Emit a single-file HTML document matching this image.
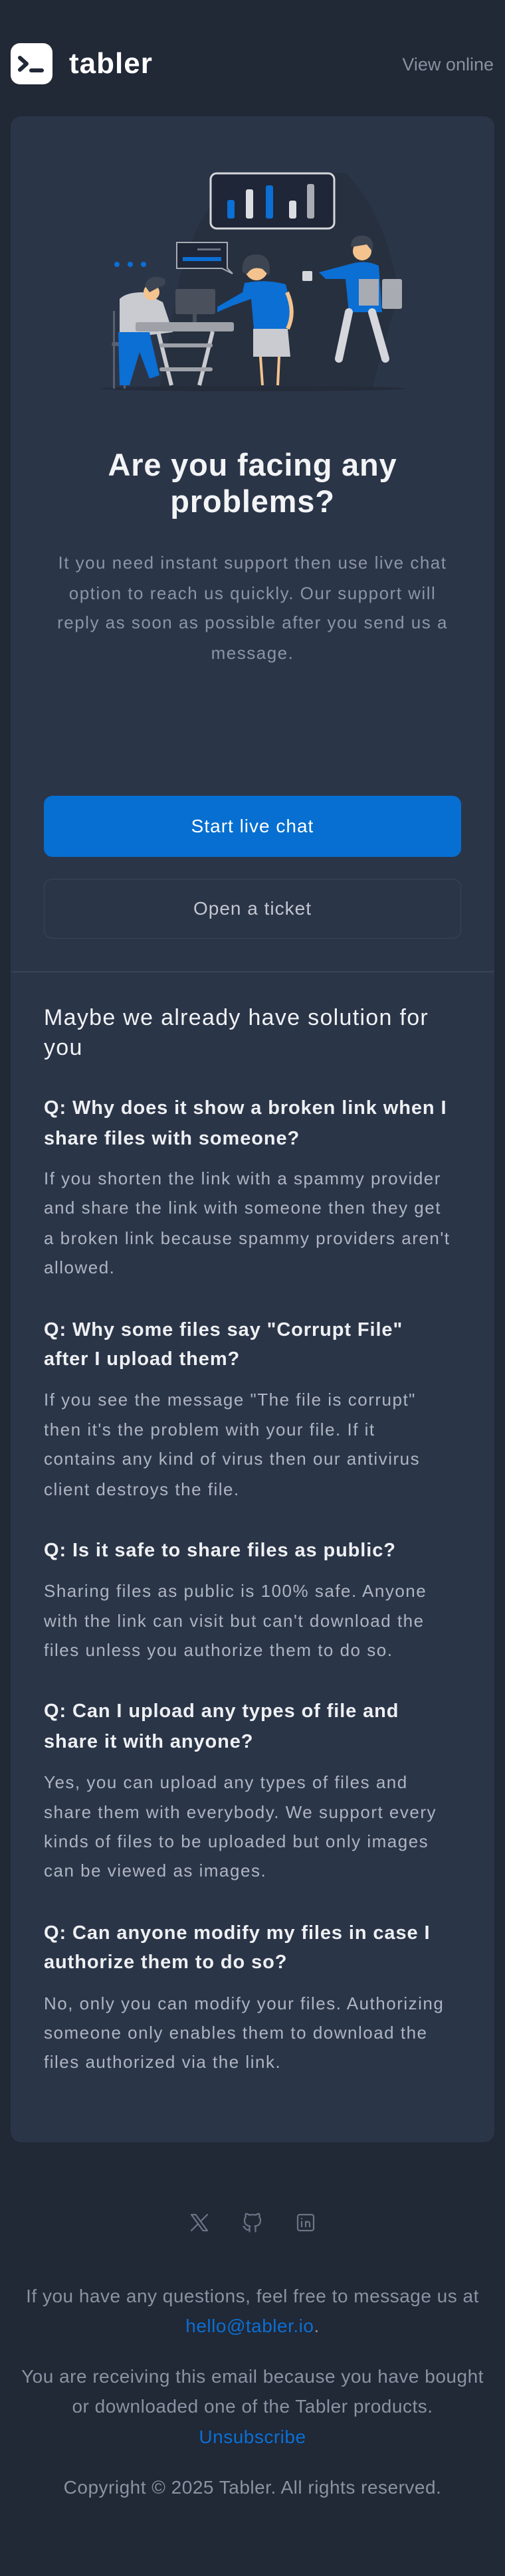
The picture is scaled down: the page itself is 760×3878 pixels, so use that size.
<!DOCTYPE html>
<html><head><meta charset="utf-8"><style>
*{margin:0;padding:0;box-sizing:border-box}
body{width:760px;height:3878px;background:#212836;font-family:"Liberation Sans",sans-serif;position:relative;overflow:hidden}
.a{position:absolute;white-space:nowrap}
.card{position:absolute;left:16px;top:175px;width:728px;height:3050px;background:#2b3548;border-radius:16px}
.h{left:0;width:760px;text-align:center;color:#f3f4f6;font-size:47px;font-weight:bold;line-height:56px;letter-spacing:.8px}
.p{left:0;width:760px;text-align:center;color:#8c95a5;font-size:26px;letter-spacing:1.5px;line-height:45px}
.q{left:66px;color:#eef0f3;font-size:29px;font-weight:bold;line-height:45px;letter-spacing:.9px}
.t{left:66px;color:#aeb5c1;font-size:26px;letter-spacing:1.5px;line-height:44px}
.f{left:0;width:760px;text-align:center;color:#8a93a3;font-size:28px;line-height:45px;letter-spacing:.5px}
.lnk{color:#0b6fd4}
</style></head><body>
<div class="a" style="left:16px;top:65px;width:63px;height:62px;background:#fff;border-radius:14px">
<svg width="63" height="62" viewBox="0 0 63 62"><path d="M14 22 L24 31 L14 40" fill="none" stroke="#212836" stroke-width="6" stroke-linecap="round" stroke-linejoin="round"/><path d="M31 41 H47" stroke="#212836" stroke-width="6" stroke-linecap="round"/></svg></div>
<div class="a" style="left:104px;top:70px;font-size:44px;font-weight:bold;color:#fff;line-height:52px;letter-spacing:1px">tabler</div>
<div class="a" style="right:17px;top:80px;font-size:27px;color:#8792a2;line-height:34px">View online</div>
<div class="card"></div>
<svg class="a" style="left:140px;top:240px" width="480" height="360" viewBox="140 240 480 360">
<path d="M270 420 Q300 300 370 260 L520 260 Q580 320 600 440 L560 585 L240 585 Z" fill="#27303f"/>
<ellipse cx="380" cy="585" rx="230" ry="4" fill="#242c3a"/>
<rect x="317" y="261" width="186" height="83" rx="9" fill="#1e2637" stroke="#d5d7dc" stroke-width="3"/>
<rect x="342" y="301" width="11" height="28" rx="3" fill="#0b6fd4"/>
<rect x="370" y="285" width="11" height="44" rx="3" fill="#dcdde2"/>
<rect x="400" y="279" width="11" height="50" rx="3" fill="#0b6fd4"/>
<rect x="435" y="302" width="11" height="27" rx="3" fill="#dcdde2"/>
<rect x="462" y="277" width="11" height="52" rx="3" fill="#a9abb2"/>
<path d="M266 365 H342 V404 L350 412 L334 404 H266 Z" fill="#1e2637" stroke="#a7acb5" stroke-width="2"/>
<rect x="297" y="374" width="35" height="3" fill="#6c7280"/>
<rect x="275" y="387" width="58" height="6" fill="#0b6fd4"/>
<circle cx="176" cy="398" r="4" fill="#0b6fd4"/><circle cx="196" cy="398" r="4" fill="#0b6fd4"/><circle cx="216" cy="398" r="4" fill="#0b6fd4"/>
<rect x="170" y="468" width="3" height="117" fill="#5a6070"/>
<rect x="168" y="515" width="50" height="6" rx="3" fill="#5a6070"/>
<rect x="186" y="521" width="3" height="64" fill="#5a6070"/>
<path d="M180 450 Q190 440 215 440 L245 455 L260 500 L180 510 Z" fill="#c9cbd0"/>
<path d="M178 500 H225 L240 565 L225 570 L210 530 L195 580 L180 580 Z" fill="#0b6fd4"/>
<circle cx="228" cy="440" r="12" fill="#f4c38e"/>
<path d="M218 430 Q225 410 248 420 Q252 430 240 432 L225 440 Z" fill="#3d4452"/>
<rect x="264" y="435" width="60" height="38" rx="3" fill="#4a505c"/>
<rect x="290" y="473" width="6" height="14" fill="#4a505c"/>
<rect x="204" y="485" width="148" height="14" rx="3" fill="#9ea1a8"/>
<path d="M238 499 L258 580 M320 499 L300 580" stroke="#c9cbd0" stroke-width="6"/>
<rect x="240" y="517" width="80" height="6" rx="3" fill="#9ea1a8"/>
<rect x="240" y="553" width="80" height="6" rx="3" fill="#9ea1a8"/>
<circle cx="386" cy="405" r="17" fill="#f4c38e"/>
<path d="M365 410 Q362 382 388 383 Q410 385 405 415 L395 405 Q380 400 372 412 Z" fill="#3d4452"/>
<path d="M368 426 Q400 420 430 428 L440 470 L430 495 H382 L378 450 L350 460 L327 470 L327 462 L365 440 Z" fill="#0b6fd4"/>
<path d="M381 495 H433 L437 537 H381 Z" fill="#c9cbd0"/>
<path d="M392 537 L395 580 M420 537 L418 580" stroke="#f4c38e" stroke-width="4"/>
<path d="M432 440 Q445 470 433 495" stroke="#f4c38e" stroke-width="6" fill="none"/>
<circle cx="545" cy="378" r="14" fill="#f4c38e"/>
<path d="M528 372 Q528 352 550 355 Q565 360 560 378 L552 368 Z" fill="#3d4452"/>
<path d="M525 398 Q550 390 570 400 L575 470 H525 L520 420 L490 420 L480 410 Z" fill="#0b6fd4"/>
<rect x="540" y="420" width="30" height="40" fill="#a9abb2"/>
<rect x="575" y="420" width="30" height="45" rx="3" fill="#a9abb2"/>
<rect x="455" y="408" width="15" height="15" rx="2" fill="#d5d7dc"/>
<path d="M525 470 L510 540 M560 470 L580 540" stroke="#d5d7dc" stroke-width="12" stroke-linecap="round"/>
</svg>
<div class="a h" style="top:672px">Are you facing any</div>
<div class="a h" style="top:727px">problems?</div>
<div class="a p" style="top:825px">It you need instant support then use live chat</div>
<div class="a p" style="top:871px">option to reach us quickly. Our support will</div>
<div class="a p" style="top:915px">reply as soon as possible after you send us a</div>
<div class="a p" style="top:961px">message.</div>
<div class="a" style="left:66px;top:1198px;width:628px;height:92px;background:#066fd1;border-radius:13px;color:#fff;font-size:28px;line-height:92px;text-align:center;letter-spacing:1px">Start live chat</div>
<div class="a" style="left:66px;top:1323px;width:628px;height:90px;border:1.5px solid #3b4659;border-radius:13px;color:#c2c7d0;font-size:28px;line-height:87px;text-align:center;letter-spacing:1px">Open a ticket</div>
<div class="a" style="left:17px;top:1462px;width:726px;height:2px;background:#3a4456"></div>
<div class="a" style="left:66px;top:1510px;color:#f0f2f5;font-size:34px;line-height:45px;letter-spacing:1.3px">Maybe we already have solution for</div>
<div class="a" style="left:66px;top:1555px;color:#f0f2f5;font-size:34px;line-height:45px;letter-spacing:1.3px">you</div>
<div class="a q" style="top:1646px">Q: Why does it show a broken link when I</div>
<div class="a q" style="top:1692px">share files with someone?</div>
<div class="a t" style="top:1752px">If you shorten the link with a spammy provider</div>
<div class="a t" style="top:1796px">and share the link with someone then they get</div>
<div class="a t" style="top:1842px">a broken link because spammy providers aren't</div>
<div class="a t" style="top:1886px">allowed.</div>
<div class="a q" style="top:1980px">Q: Why some files say "Corrupt File"</div>
<div class="a q" style="top:2024px">after I upload them?</div>
<div class="a t" style="top:2085px">If you see the message "The file is corrupt"</div>
<div class="a t" style="top:2130px">then it's the problem with your file. If it</div>
<div class="a t" style="top:2174px">contains any kind of virus then our antivirus</div>
<div class="a t" style="top:2220px">client destroys the file.</div>
<div class="a q" style="top:2312px">Q: Is it safe to share files as public?</div>
<div class="a t" style="top:2373px">Sharing files as public is 100% safe. Anyone</div>
<div class="a t" style="top:2418px">with the link can visit but can't download the</div>
<div class="a t" style="top:2462px">files unless you authorize them to do so.</div>
<div class="a q" style="top:2554px">Q: Can I upload any types of file and</div>
<div class="a q" style="top:2600px">share it with anyone?</div>
<div class="a t" style="top:2661px">Yes, you can upload any types of files and</div>
<div class="a t" style="top:2706px">share them with everybody. We support every</div>
<div class="a t" style="top:2750px">kinds of files to be uploaded but only images</div>
<div class="a t" style="top:2794px">can be viewed as images.</div>
<div class="a q" style="top:2888px">Q: Can anyone modify my files in case I</div>
<div class="a q" style="top:2932px">authorize them to do so?</div>
<div class="a t" style="top:2994px">No, only you can modify your files. Authorizing</div>
<div class="a t" style="top:3038px">someone only enables them to download the</div>
<div class="a t" style="top:3082px">files authorized via the link.</div>
<svg class="a" style="left:282px;top:3328px" width="36" height="36" viewBox="0 0 24 24" fill="none" stroke="#6b7485" stroke-width="1.5" stroke-linecap="round" stroke-linejoin="round"><path d="M4 4l11.7 16H20L8.3 4z"/><path d="M4 20l6.8-6.8M13.2 10.8L20 4"/></svg>
<svg class="a" style="left:362px;top:3328px" width="36" height="36" viewBox="0 0 24 24" fill="none" stroke="#6b7485" stroke-width="1.5" stroke-linecap="round" stroke-linejoin="round"><path d="M9 19c-4.3 1.4-4.3-2.5-6-3m12 5v-3.5c0-1 .1-1.4-.5-2 2.8-.3 5.5-1.4 5.5-6a4.6 4.6 0 0 0-1.3-3.2 4.2 4.2 0 0 0-.1-3.2s-1.1-.3-3.5 1.3a12.3 12.3 0 0 0-6.2 0C6.5 2.8 5.4 3.1 5.4 3.1a4.2 4.2 0 0 0-.1 3.2A4.6 4.6 0 0 0 4 9.5c0 4.6 2.7 5.7 5.5 6-.6.6-.6 1.2-.5 2V21"/></svg>
<svg class="a" style="left:442px;top:3328px" width="36" height="36" viewBox="0 0 24 24" fill="none" stroke="#6b7485" stroke-width="1.5" stroke-linecap="round" stroke-linejoin="round"><rect x="4" y="4" width="16" height="16" rx="2"/><path d="M8 11v5M8 8v.01M12 16v-5M16 16v-3a2 2 0 0 0-4 0"/></svg>
<div class="a f" style="top:3434px">If you have any questions, feel free to message us at</div>
<div class="a f" style="top:3479px"><span class="lnk">hello@tabler.io</span>.</div>
<div class="a f" style="top:3555px">You are receiving this email because you have bought</div>
<div class="a f" style="top:3600px">or downloaded one of the Tabler products.</div>
<div class="a f" style="top:3646px"><span class="lnk">Unsubscribe</span></div>
<div class="a f" style="top:3722px">Copyright © 2025 Tabler. All rights reserved.</div>
</body></html>
